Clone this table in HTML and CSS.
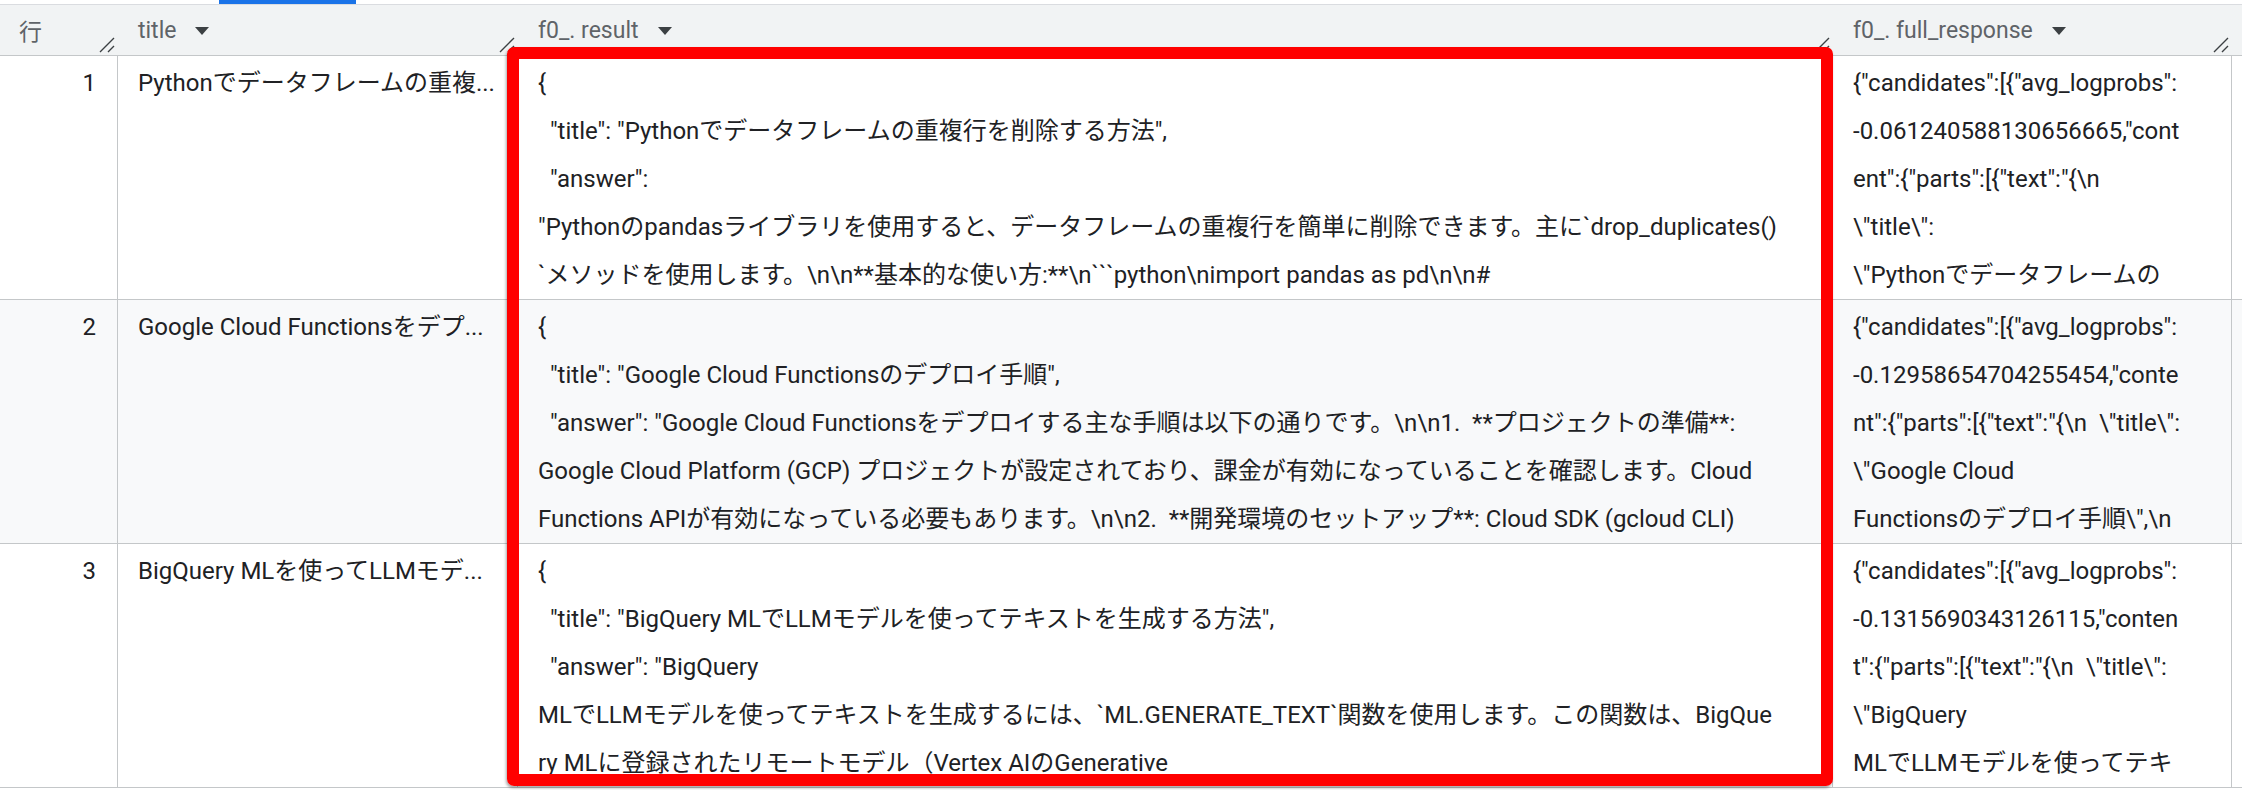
FILE: index.html
```html
<!DOCTYPE html>
<html lang="ja">
<head>
<meta charset="utf-8">
<link rel="stylesheet" href="styles.css">
</head>
<body>
<div class="page">
  <div class="topbar"><div class="tab-ind"></div></div>
  <div class="table">
    <div class="hrow">
      <div class="hc c-num"><span class="hl">行</span><svg class="rsz" viewBox="0 0 16 16"><path d="M1 15 L15 1 M9 15 L15 9"/></svg></div>
      <div class="hc c-title"><span class="hl">title</span><span class="caret"></span><svg class="rsz" viewBox="0 0 16 16"><path d="M1 15 L15 1 M9 15 L15 9"/></svg></div>
      <div class="hc c-res"><span class="hl">f0_. result</span><span class="caret"></span><svg class="rsz" viewBox="0 0 16 16"><path d="M1 15 L15 1 M9 15 L15 9"/></svg></div>
      <div class="hc c-full"><span class="hl">f0_. full_response</span><span class="caret"></span><svg class="rsz" viewBox="0 0 16 16"><path d="M1 15 L15 1 M9 15 L15 9"/></svg></div>
      <div class="hc c-fill"></div>
    </div>

    <div class="row">
      <div class="bc c-num num">1</div>
      <div class="bc c-title"><div class="ln">Pythonでデータフレームの重複...</div></div>
      <div class="bc c-res">
        <div class="ln">{</div>
        <div class="ln">  "title": "Pythonでデータフレームの重複行を削除する方法",</div>
        <div class="ln">  "answer":</div>
        <div class="ln">"Pythonのpandasライブラリを使用すると、データフレームの重複行を簡単に削除できます。主に`drop_duplicates()</div>
        <div class="ln">`メソッドを使用します。\n\n**基本的な使い方:**\n```python\nimport pandas as pd\n\n#</div>
      </div>
      <div class="bc c-full">
        <div class="ln">{"candidates":[{"avg_logprobs":</div>
        <div class="ln">-0.061240588130656665,"cont</div>
        <div class="ln">ent":{"parts":[{"text":"{\n</div>
        <div class="ln">\"title\":</div>
        <div class="ln">\"Pythonでデータフレームの</div>
      </div>
      <div class="bc c-fill"></div>
    </div>

    <div class="row alt">
      <div class="bc c-num num">2</div>
      <div class="bc c-title"><div class="ln">Google Cloud Functionsをデプ...</div></div>
      <div class="bc c-res">
        <div class="ln">{</div>
        <div class="ln">  "title": "Google Cloud Functionsのデプロイ手順",</div>
        <div class="ln">  "answer": "Google Cloud Functionsをデプロイする主な手順は以下の通りです。\n\n1.  **プロジェクトの準備**:</div>
        <div class="ln">Google Cloud Platform (GCP) プロジェクトが設定されており、課金が有効になっていることを確認します。Cloud</div>
        <div class="ln">Functions APIが有効になっている必要もあります。\n\n2.  **開発環境のセットアップ**: Cloud SDK (gcloud CLI)</div>
      </div>
      <div class="bc c-full">
        <div class="ln">{"candidates":[{"avg_logprobs":</div>
        <div class="ln">-0.12958654704255454,"conte</div>
        <div class="ln">nt":{"parts":[{"text":"{\n  \"title\":</div>
        <div class="ln">\"Google Cloud</div>
        <div class="ln">Functionsのデプロイ手順\",\n</div>
      </div>
      <div class="bc c-fill"></div>
    </div>

    <div class="row">
      <div class="bc c-num num">3</div>
      <div class="bc c-title"><div class="ln">BigQuery MLを使ってLLMモデ...</div></div>
      <div class="bc c-res">
        <div class="ln">{</div>
        <div class="ln">  "title": "BigQuery MLでLLMモデルを使ってテキストを生成する方法",</div>
        <div class="ln">  "answer": "BigQuery</div>
        <div class="ln">MLでLLMモデルを使ってテキストを生成するには、`ML.GENERATE_TEXT`関数を使用します。この関数は、BigQue</div>
        <div class="ln">ry MLに登録されたリモートモデル（Vertex AIのGenerative</div>
      </div>
      <div class="bc c-full">
        <div class="ln">{"candidates":[{"avg_logprobs":</div>
        <div class="ln">-0.1315690343126115,"conten</div>
        <div class="ln">t":{"parts":[{"text":"{\n  \"title\":</div>
        <div class="ln">\"BigQuery</div>
        <div class="ln">MLでLLMモデルを使ってテキ</div>
      </div>
      <div class="bc c-fill"></div>
    </div>
  </div>
  <div class="hilite"></div>
</div>
</body>
</html>
```

FILE: styles.css
```css
* { box-sizing: border-box; }
html, body { margin: 0; padding: 0; background: #ffffff; }
body {
  font-family: Roboto, "Noto Sans CJK JP", "Noto Sans", sans-serif;
  color: #202124;
  width: 2242px;
  height: 790px;
  overflow: hidden;
}
.page { position: relative; width: 2242px; height: 790px; }

.topbar {
  height: 5px;
  border-bottom: 1px solid #dadce0;
  background: #ffffff;
}
.tab-ind {
  margin-left: 219px;
  width: 137px;
  height: 4px;
  background: #1a73e8;
}

.hrow, .row {
  display: grid;
  grid-template-columns: 118px 400px 1315px 399px 1fr;
}
.hrow {
  height: 51px;
  background: #f1f3f4;
  border-bottom: 1px solid #c4c7c9;
}
.hc {
  position: relative;
  display: flex;
  align-items: center;
  padding-left: 20px;
  font-size: 23px;
  color: #5f6368;
  white-space: nowrap;
}
.hc.c-num { padding-left: 19px; }
.caret {
  width: 0; height: 0;
  margin-left: 19px;
  margin-top: 2px;
  border-left: 7px solid transparent;
  border-right: 7px solid transparent;
  border-top: 8px solid #3c4043;
}
.rsz {
  position: absolute;
  right: 3px;
  bottom: 2px;
  width: 16px;
  height: 16px;
  fill: none;
  stroke: #3c4043;
  stroke-width: 1.4;
}

.row {
  height: 244px;
  border-bottom: 1px solid #c4c7c9;
}
.row.alt { background: #f8f9fa; }
.bc {
  padding: 3px 20px 0 20px;
  font-size: 24px;
  line-height: 48px;
  overflow: hidden;
  border-right: 1px solid #c4c7c9;
}
.bc.c-fill { border-right: none; }
.bc.num { text-align: right; padding-right: 21px; }
.ln { white-space: pre; overflow: hidden; }

.hilite {
  position: absolute;
  left: 507px;
  top: 47px;
  width: 1326px;
  height: 739px;
  border: 12px solid #ff0000;
  border-radius: 7px;
  box-shadow: -1px 2px 3px rgba(0,0,0,0.35);
  pointer-events: none;
}
```
